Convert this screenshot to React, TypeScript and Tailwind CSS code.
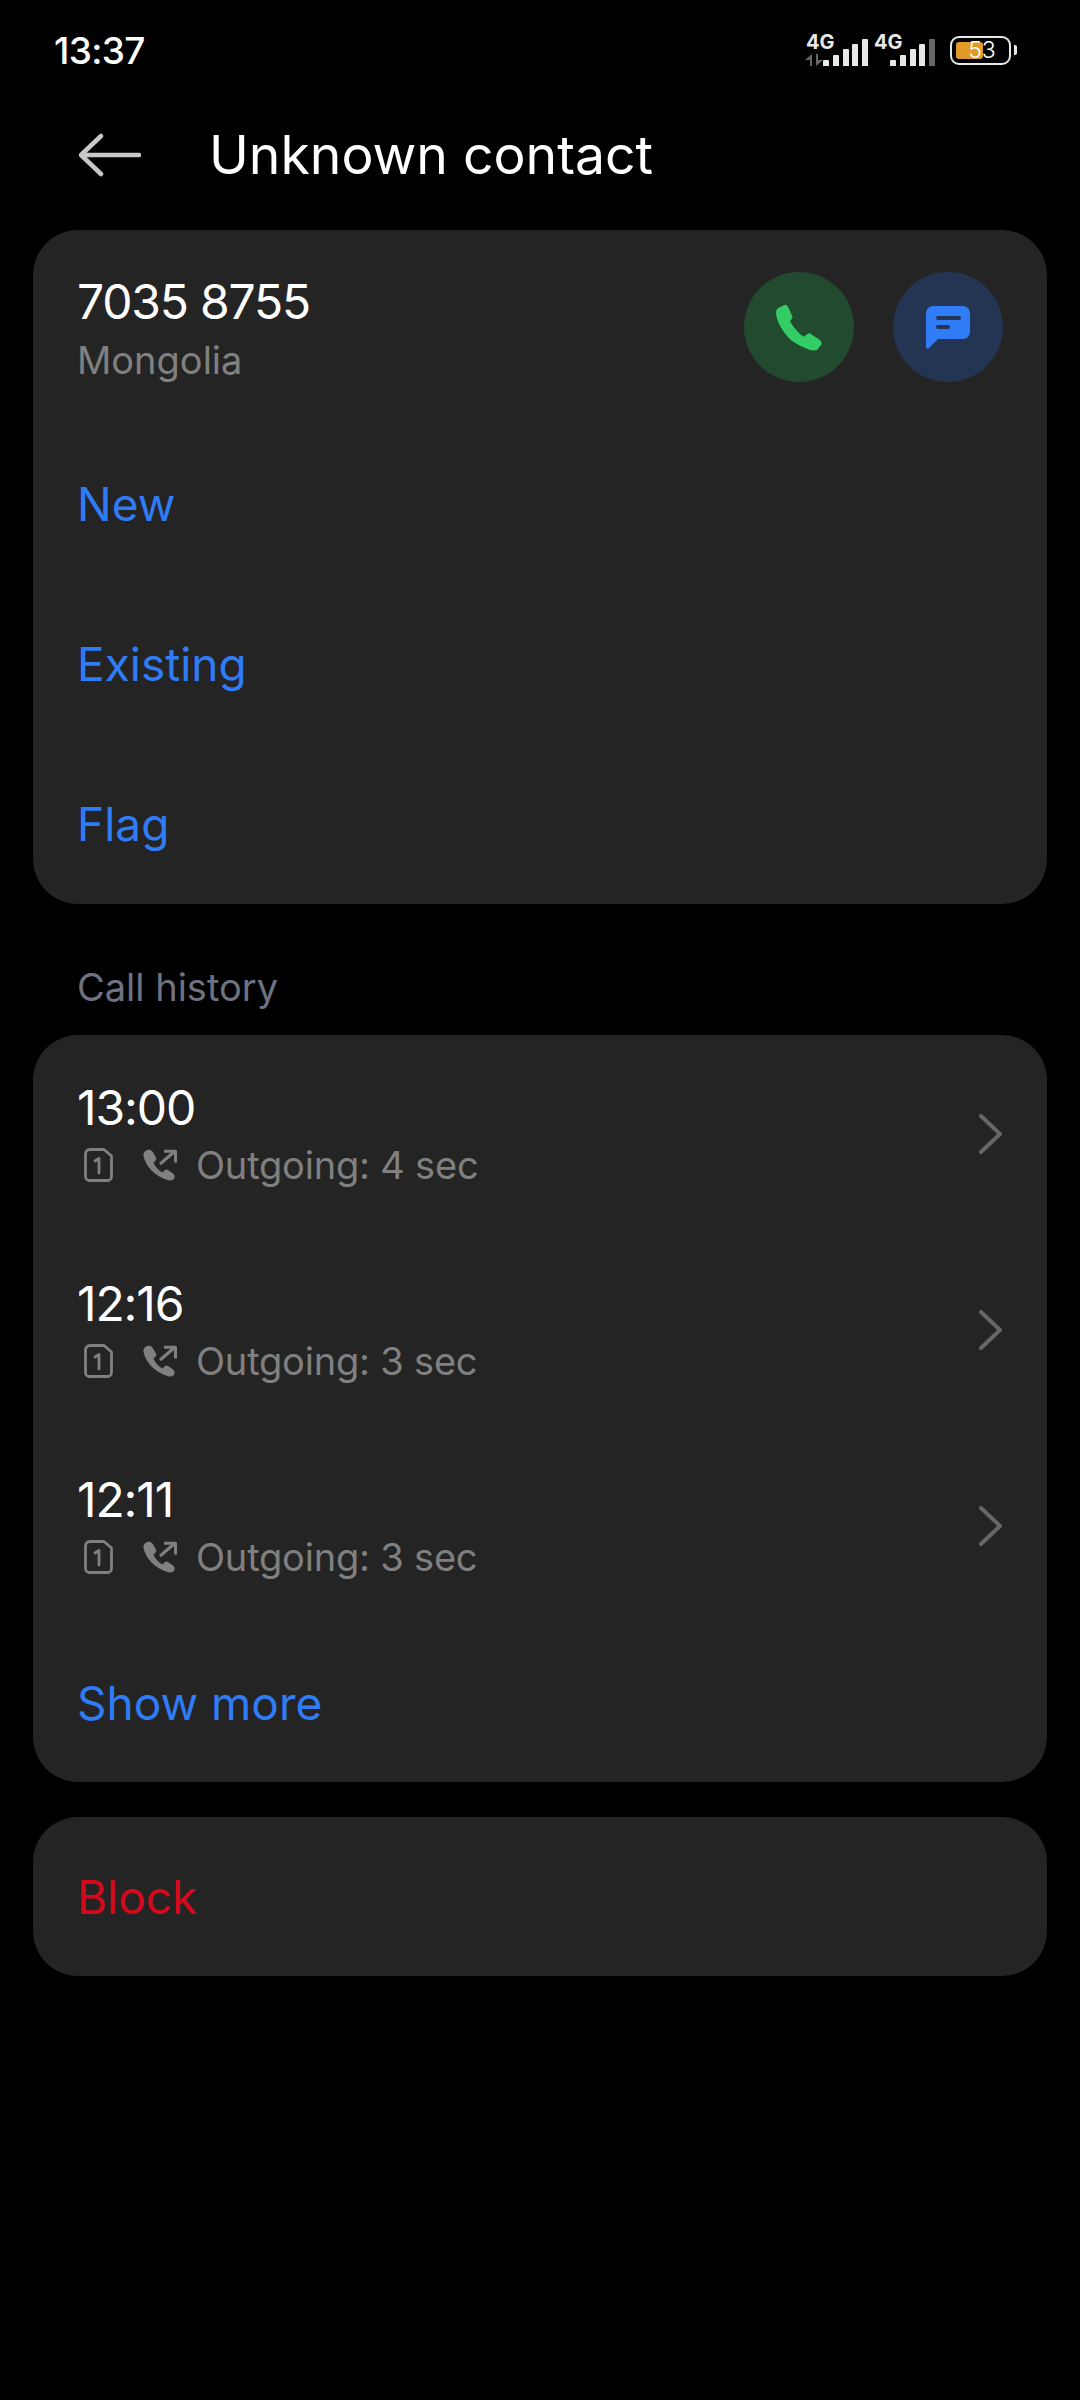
const FONT = "font-['Inter','Noto_Sans',sans-serif]";

const calls = [
  { time: '13:00', detail: 'Outgoing: 4 sec' },
  { time: '12:16', detail: 'Outgoing: 3 sec' },
  { time: '12:11', detail: 'Outgoing: 3 sec' },
];

function Signal({ lastDim }: { lastDim?: boolean }) {
  const heights = [6, 11, 17, 22, 27];
  return (
    <div className="flex items-end gap-[3.7px]">
      {heights.map((h, i) => (
        <div
          key={i}
          className={`w-[6px] rounded-t-[1px] ${lastDim && i === 4 ? 'bg-[#666666]' : 'bg-[#e8e8e8]'}`}
          style={{ height: h }}
        />
      ))}
    </div>
  );
}

function StatusBar() {
  return (
    <div className="flex h-[100px] items-center justify-between pl-[54px] pr-[63px]">
      <span className="text-[37px] font-medium leading-none tracking-[-0.7px] text-white">13:37</span>
      <div className="flex items-center">
        <div className="relative h-[32px] w-[63px]">
          <span className="absolute left-[1px] top-[-2px] text-[20px] font-bold leading-none text-[#e8e8e8]">4G</span>
          <svg className="absolute bottom-0 left-0" width="18" height="12" viewBox="0 0 18 12">
            <path d="M7 0V12H5V6H0Z M11 12V0H13V6H18Z" fill="#666666" />
          </svg>
          <div className="absolute bottom-0 right-0">
            <Signal />
          </div>
        </div>
        <div className="relative ml-[6px] h-[32px] w-[61px]">
          <span className="absolute left-0 top-[-2px] text-[20px] font-bold leading-none text-[#e8e8e8]">4G</span>
          <div className="absolute bottom-0 right-0">
            <Signal lastDim />
          </div>
        </div>
        <div className="ml-[15px] flex items-center">
          <div className="relative h-[29px] w-[61px] rounded-[9px] border-[2px] border-[#e8e8e8] p-[4px]">
            <div className="h-full w-[27px] rounded-[3px] bg-[#e09a26]" />
            <span className="absolute inset-0 flex items-center justify-center pl-[3px] text-[23px] font-light leading-none text-white">53</span>
          </div>
          <div className="ml-[3px] h-[10px] w-[3px] rounded-r-[2px] bg-[#e8e8e8]" />
        </div>
      </div>
    </div>
  );
}

function SimIcon() {
  return (
    <svg width="29" height="34" viewBox="0 0 29 34" fill="none">
      <path
        d="M6 1.500h14l7.500 6.500v20.500a4 4 0 0 1-4 4H5.500a4 4 0 0 1-4-4V6a4.500 4.500 0 0 1 4.500-4.500z"
        stroke="#808080"
        strokeWidth="2.8"
        strokeLinejoin="round"
      />
      <path d="M11 13l4-2.500V25" stroke="#808080" strokeWidth="2.8" strokeLinecap="round" strokeLinejoin="round" />
    </svg>
  );
}

function OutgoingIcon() {
  return (
    <svg width="34" height="32" viewBox="0 0 34 32" fill="none">
      <path
        d="M4 1 C1.500 2 0 4 0.500 7 C2.500 17 12 28 26 31.500 C29 32 31 30.500 31.500 28.500 C32 26.500 31 25.500 30 24.500 L25 21 C23.500 20 22.500 20.500 21.500 21.500 L19.500 23.500 C15.500 21.500 12 17.500 10.500 13.500 L12.500 11.500 C13.500 10.500 13.500 9.500 13 8.500 L9.500 2.500 C8 0.500 6 0.300 4 1 Z"
        fill="#808080"
      />
      <path d="M17 15 L31 3 M21 2.200 H32.500 V13.500" stroke="#808080" strokeWidth="3" strokeLinejoin="round" />
    </svg>
  );
}

function CallRow({ time, detail }: { time: string; detail: string }) {
  return (
    <div className="flex h-[196px] items-center justify-between px-[44px]">
      <div className="mt-[5px] flex flex-col">
        <span className="text-[48px] leading-[60px] tracking-[-1.1px] text-white">{time}</span>
        <div className="mt-[-1px] flex h-[56px] items-center">
          <div className="ml-[7px] flex">
            <SimIcon />
          </div>
          <div className="ml-[30px] flex">
            <OutgoingIcon />
          </div>
          <span className="ml-[19px] text-[38px] leading-none tracking-[-0.2px] text-[#808080]">{detail}</span>
        </div>
      </div>
      <svg className="mt-[2px]" width="24" height="40" viewBox="0 0 24 40" fill="none">
        <path d="M2 2 L21 20 L2 38" stroke="#666666" strokeWidth="4" strokeLinecap="round" strokeLinejoin="round" />
      </svg>
    </div>
  );
}

function ActionRow({ label }: { label: string }) {
  return (
    <div className="flex h-[160px] items-center px-[44px]">
      <span className="text-[46px] leading-none text-[#2f7cf6]">{label}</span>
    </div>
  );
}

export default function App() {
  return (
    <div className={`${FONT} min-h-[2400px] w-[1080px] bg-black`}>
      <StatusBar />

      <div className="flex h-[110px] items-center pl-[79px]">
        <svg width="62" height="44" viewBox="0 0 62 44" fill="none">
          <path d="M22 3 L2 22 L22 41 M2 22 H60" stroke="#c8c8c8" strokeWidth="4.500" strokeLinecap="round" strokeLinejoin="round" />
        </svg>
        <span className="ml-[68px] text-[53.500px] leading-none text-white">Unknown contact</span>
      </div>

      <div className="mx-[33px] mt-[20px] rounded-[45px] bg-[#242424] pt-[42px]">
        <div className="flex items-start justify-between px-[44px]">
          <div className="flex flex-col">
            <span className="text-[48px] leading-[60px] tracking-[-1.2px] text-white">7035 8755</span>
            <span className="text-[38px] leading-[56px] text-[#808080]">Mongolia</span>
          </div>
          <div className="flex gap-[39px]">
            <div className="flex h-[110px] w-[110px] items-center justify-center rounded-full bg-[#214a2e]">
              <svg width="46" height="47" viewBox="0 0 46 47">
                <path
                  d="M2.300 4 L9 0.700 Q11 0.200 12.300 3.300 L16.700 13.300 L14 17.300 Q17 23 22.300 28.300 Q25 31 27.300 32.700 L33.300 29 L44 36 Q46 38 45.700 40 L42 45 Q40.700 46.500 38 46.500 L34 46 Q24 42.500 15.700 36.700 Q7 29 2.300 18.300 Q0 13 0 8.300 Q0 5.500 2.300 4 Z"
                  fill="#33cc66"
                />
              </svg>
            </div>
            <div className="flex h-[110px] w-[110px] items-center justify-center rounded-full bg-[#233552]">
              <svg width="44" height="43" viewBox="0 0 44 43">
                <path
                  fillRule="evenodd"
                  d="M7 0 H37 A7 7 0 0 1 44 7 V26 A7 7 0 0 1 37 33 H12 L3 42 C1.500 43.500 0 42.500 0 41 V7 A7 7 0 0 1 7 0 Z M12 10 A2 2 0 0 0 12 14 H33 A2 2 0 0 0 33 10 Z M12 19 A2 2 0 0 0 12 23 H22 A2 2 0 0 0 22 19 Z"
                  fill="#2f7cf6"
                />
              </svg>
            </div>
          </div>
        </div>
        <div className="mt-[36px]">
          <ActionRow label="New" />
          <ActionRow label="Existing" />
          <ActionRow label="Flag" />
        </div>
      </div>

      <div className="flex h-[131px] items-end pb-[29px] pl-[77px]">
        <span className="text-[38px] leading-none text-[#6f7280]">Call history</span>
      </div>

      <div className="mx-[33px] rounded-[45px] bg-[#242424]">
        {calls.map((c) => (
          <CallRow key={c.time} time={c.time} detail={c.detail} />
        ))}
        <div className="flex h-[159px] items-center px-[44px]">
          <span className="text-[46px] leading-none text-[#2f7cf6]">Show more</span>
        </div>
      </div>

      <div className="mx-[33px] mt-[35px] flex h-[159px] items-center rounded-[45px] bg-[#242424] px-[44px]">
        <span className="text-[46px] leading-none text-[#d40a1c]">Block</span>
      </div>
    </div>
  );
}
